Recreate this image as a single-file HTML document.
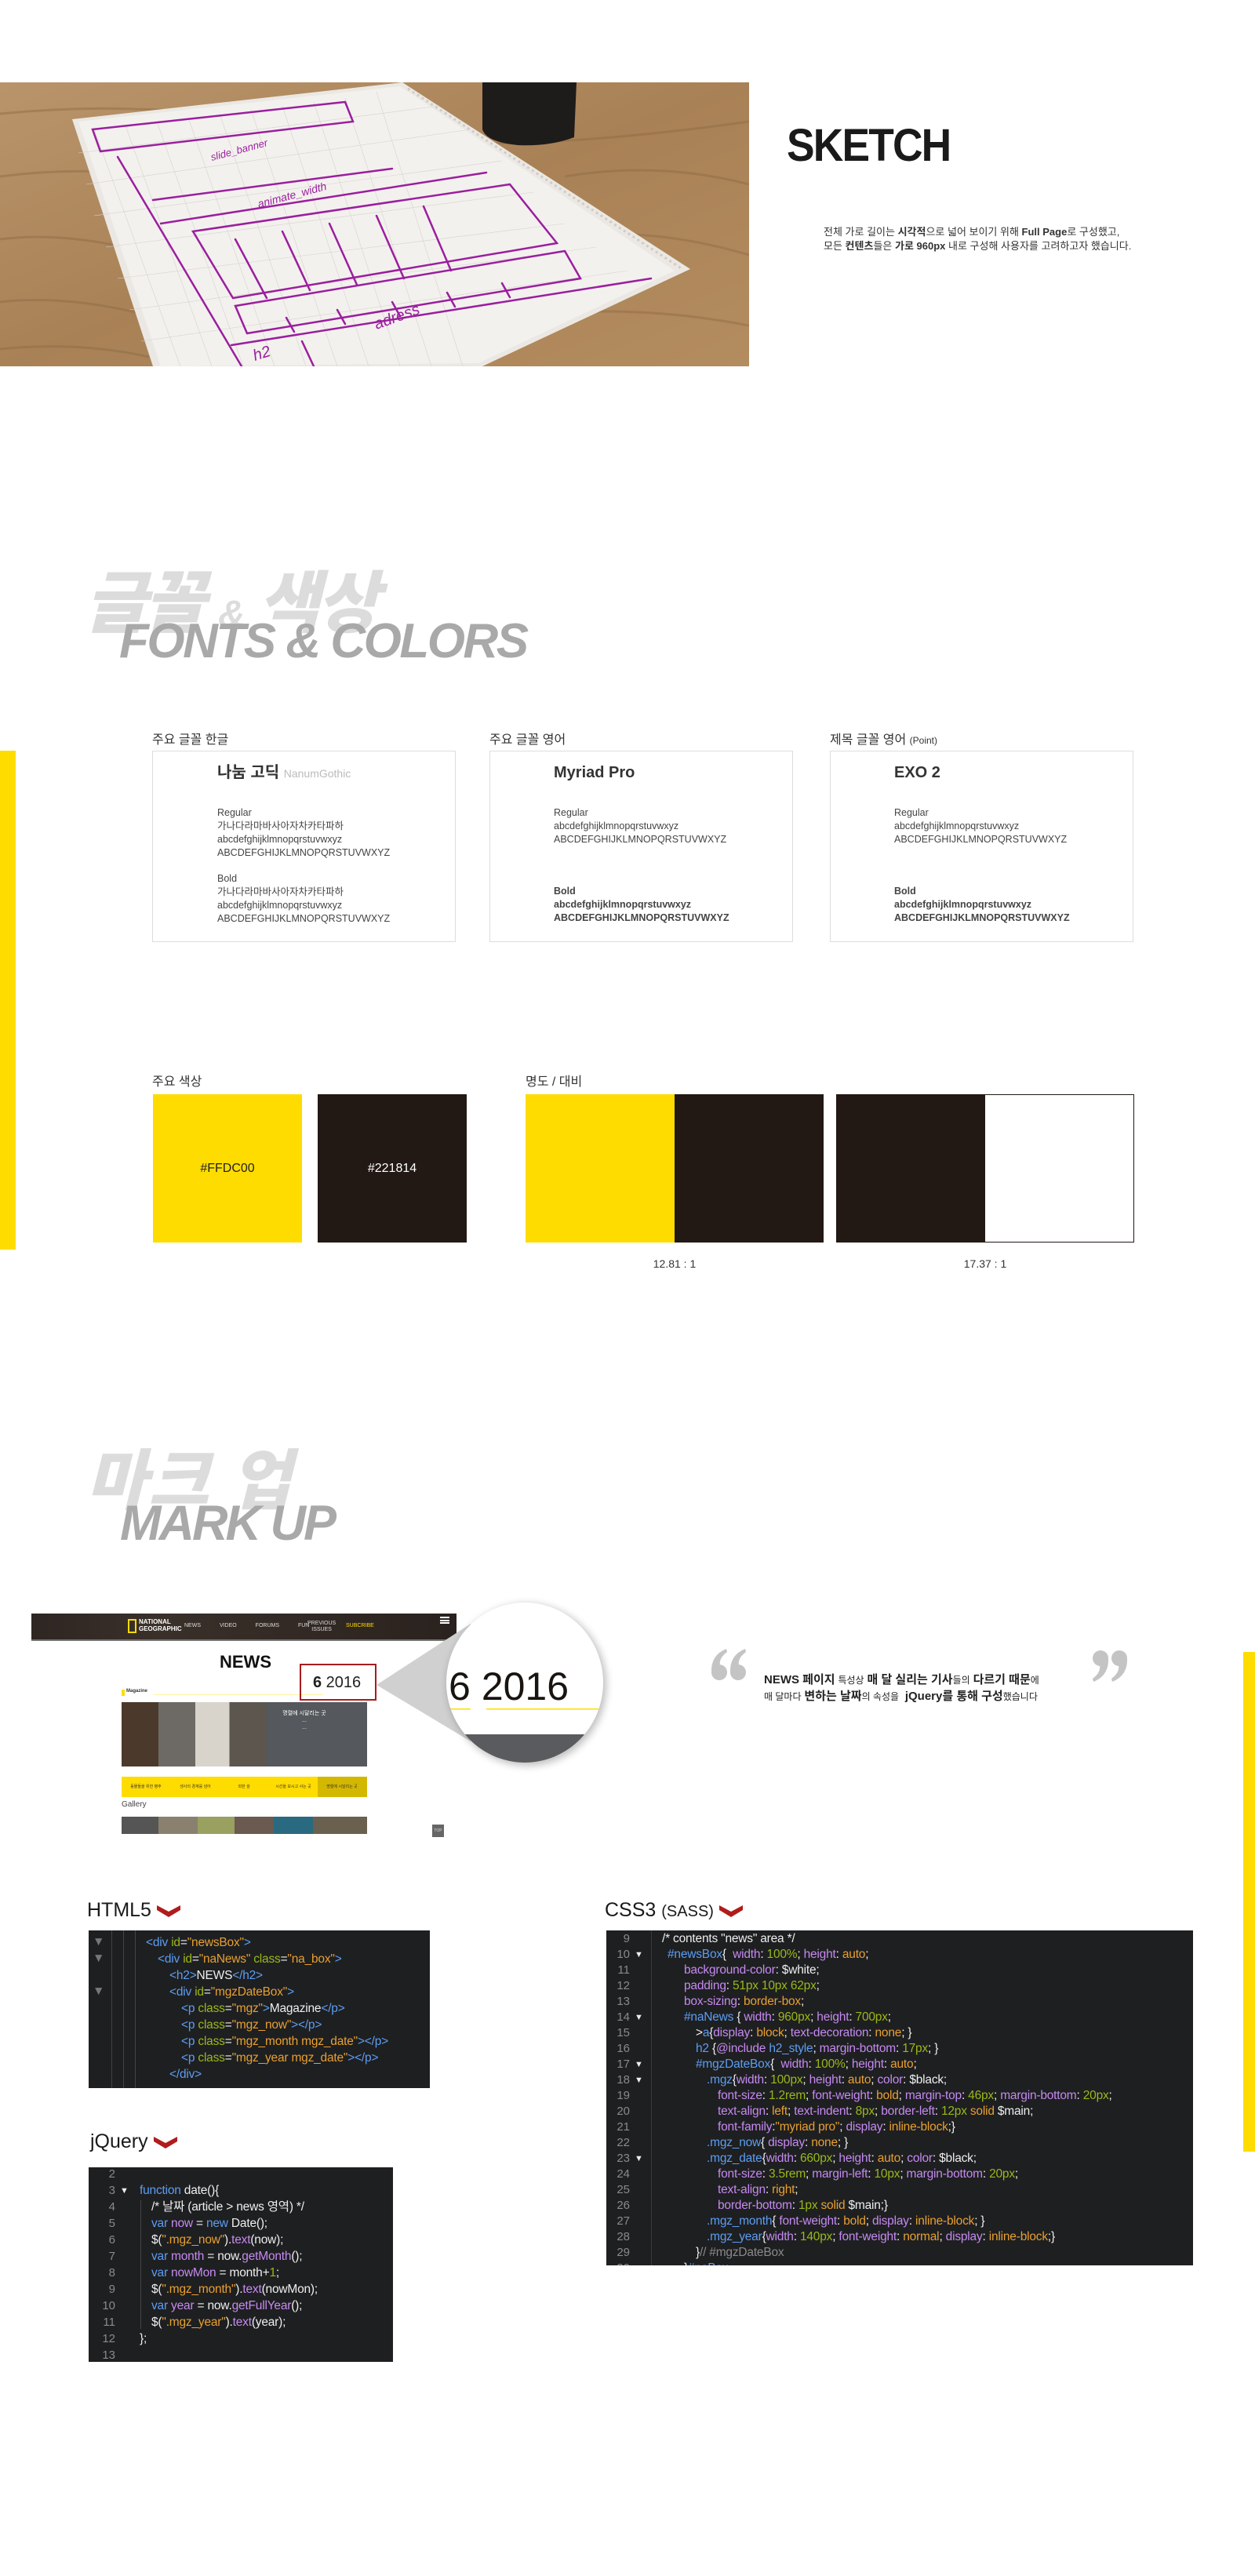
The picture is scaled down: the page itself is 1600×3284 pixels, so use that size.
<!DOCTYPE html>
<html><head><meta charset="utf-8">
<style>
*{margin:0;padding:0;box-sizing:border-box}
body{width:1600px;height:3284px;background:#fff;position:relative;overflow:hidden;font-family:"Liberation Sans","Noto Sans CJK KR",sans-serif;color:#222}
.a{position:absolute;white-space:nowrap}
.kr{font-family:"Liberation Sans","Noto Sans CJK KR",sans-serif}
.card{position:absolute;border:1px solid #ddd;background:#fff}
.card .a{font-size:12.5px;color:#444;line-height:17px}
.code{position:absolute;background:#1e1f21;overflow:hidden}
.code .l{position:absolute;white-space:pre;font-size:15.5px;line-height:20px;color:#eee;letter-spacing:-0.2px}
.code .n{position:absolute;font-size:15px;line-height:20px;color:#8a8a8a;text-align:right;width:26px}
.p{color:#c58af0}.g{color:#9ab81a}.o{color:#e8a030}.b{color:#5c9df2}.w{color:#f0f0f0}.c{color:#8a8a8a}
.chev{display:inline-block;vertical-align:middle}
.nv{position:absolute;top:2265px;height:26px;width:62px;font-size:5px;color:#333;text-align:center;line-height:26px;overflow:hidden}
</style></head><body>

<!-- SKETCH -->
<svg class="a" style="left:0;top:105px" width="955" height="362" viewBox="0 0 955 362">
<defs><linearGradient id="wd" x1="0" y1="0" x2="1" y2="1"><stop offset="0" stop-color="#b9946a"/><stop offset="0.5" stop-color="#a98156"/><stop offset="1" stop-color="#b38c5f"/></linearGradient></defs>
<rect width="955" height="362" fill="url(#wd)"/>
<g stroke="#8d6a44" stroke-width="3" fill="none" opacity="0.45">
<path d="M0 40 Q200 20 400 60 T955 50"/><path d="M0 120 Q150 100 300 140"/><path d="M0 200 Q80 190 180 215"/><path d="M0 280 Q90 270 200 300"/><path d="M650 300 Q800 280 955 310"/><path d="M700 200 Q820 180 955 220"/><path d="M720 120 Q840 100 955 130"/><path d="M0 340 Q100 330 190 350"/>
</g>
<polygon points="92,47 513,0 880,238 615,362 195,362" fill="#ebe8e3"/>
<polygon points="100,50 510,5 860,240 610,358 205,362" fill="#f3f1ee"/>
<g stroke="#d6d2cc" stroke-width="0.6">
<path d="M120 60 L230 362 M160 55 L270 362 M200 50 L310 362 M240 45 L350 362 M280 40 L390 362 M320 35 L430 362 M360 30 L470 362 M400 25 L510 362 M440 20 L550 362 M480 12 L590 362"/>
<path d="M100 90 L560 30 M110 130 L600 60 M120 170 L640 100 M135 210 L680 140 M150 250 L720 180 M165 290 L760 210 M180 330 L800 240"/>
</g>
<g stroke="#cfcbc5" stroke-width="3" fill="none"><path d="M520 8 L870 238" stroke-dasharray="3 4"/></g>
<path d="M615 0 L735 0 L732 70 Q700 82 660 80 Q620 76 615 60 Z" fill="#1e1c1a"/>
<g stroke="#9a1f9e" stroke-width="2.5" fill="none" stroke-linecap="round">
<path d="M118 60 L440 25 L450 50 L128 88 Z"/>
<path d="M150 95 L308 362"/>
<path d="M195 150 L500 110"/>
<path d="M205 180 L620 115"/>
<path d="M246 190 L650 130 L710 205 L297 275 Z"/>
<path d="M300 285 L720 215 L740 250 L315 320 Z"/>
<path d="M295 335 L830 250"/>
<path d="M300 200 L340 275 M360 190 L395 265 M420 180 L455 258 M480 170 L515 250 M540 158 L575 240"/>
<path d="M365 300 L375 318 M430 290 L440 308 M500 280 L510 298 M570 268 L580 286 M640 256 L650 274"/>
<path d="M385 330 L400 362"/>
</g>
<g fill="#9a1f9e" font-family="Liberation Sans" font-style="italic" font-size="20">
<text x="480" y="315" transform="rotate(-20 480 315)">adress</text>
<text x="325" y="355" transform="rotate(-18 325 355)">h2</text>
<text x="330" y="160" font-size="14" transform="rotate(-15 330 160)">animate_width</text>
<text x="270" y="100" font-size="13" transform="rotate(-15 270 100)">slide_banner</text>
</g>
</svg>
<div class="a" style="left:1003px;top:152px;font-size:58px;font-weight:bold;color:#1a1a1a;letter-spacing:-2px;transform:scaleX(0.92);transform-origin:left">SKETCH</div>
<div class="a kr" style="left:1050px;top:287px;font-size:13px;line-height:18px;color:#333">전체 가로 길이는 <b>시각적</b>으로 넓어 보이기 위해 <b>Full Page</b>로 구성했고,<br>모든 <b>컨텐츠</b>들은 <b>가로 960px</b> 내로 구성해 사용자를 고려하고자 했습니다.</div>

<!-- FONTS & COLORS -->
<div class="a kr" style="left:108px;top:715px;font-size:86px;font-weight:900;font-style:italic;color:#dcdcdc;letter-spacing:-4px;line-height:110px">글꼴 <span style="font-size:48px">&amp;</span> 색상</div>
<div class="a" style="left:152px;top:778px;font-size:62px;font-weight:bold;font-style:italic;color:#a9a9a9;letter-spacing:-2.5px;line-height:80px">FONTS &amp; COLORS</div>

<div class="a" style="left:0;top:957px;width:20px;height:636px;background:#ffdc00"></div>

<div class="a kr" style="left:194px;top:929px;font-size:16px;color:#333">주요 글꼴 한글</div>
<div class="a kr" style="left:624px;top:929px;font-size:16px;color:#333">주요 글꼴 영어</div>
<div class="a kr" style="left:1058px;top:929px;font-size:16px;color:#333">제목 글꼴 영어 <span style="font-size:12px">(Point)</span></div>

<div class="card" style="left:194px;top:957px;width:387px;height:244px">
<div class="a" style="left:82px;top:19px;font-size:20px;font-weight:bold;color:#333">나눔 고딕 <span style="font-size:14px;font-weight:normal;color:#bbb">NanumGothic</span></div>
<div class="a" style="left:82px;top:70px">Regular<br>가나다라마바사아자차카타파하<br>abcdefghijklmnopqrstuvwxyz<br>ABCDEFGHIJKLMNOPQRSTUVWXYZ</div>
<div class="a" style="left:82px;top:154px">Bold<br>가나다라마바사아자차카타파하<br>abcdefghijklmnopqrstuvwxyz<br>ABCDEFGHIJKLMNOPQRSTUVWXYZ</div>
</div>
<div class="card" style="left:624px;top:957px;width:387px;height:244px">
<div class="a" style="left:81px;top:19px;font-size:20px;font-weight:bold;color:#333">Myriad Pro</div>
<div class="a" style="left:81px;top:70px">Regular<br>abcdefghijklmnopqrstuvwxyz<br>ABCDEFGHIJKLMNOPQRSTUVWXYZ</div>
<div class="a" style="left:81px;top:170px;font-weight:bold">Bold<br>abcdefghijklmnopqrstuvwxyz<br>ABCDEFGHIJKLMNOPQRSTUVWXYZ</div>
</div>
<div class="card" style="left:1058px;top:957px;width:387px;height:244px">
<div class="a" style="left:81px;top:19px;font-size:20px;font-weight:bold;color:#333">EXO 2</div>
<div class="a" style="left:81px;top:70px">Regular<br>abcdefghijklmnopqrstuvwxyz<br>ABCDEFGHIJKLMNOPQRSTUVWXYZ</div>
<div class="a" style="left:81px;top:170px;font-weight:bold">Bold<br>abcdefghijklmnopqrstuvwxyz<br>ABCDEFGHIJKLMNOPQRSTUVWXYZ</div>
</div>

<div class="a kr" style="left:194px;top:1365px;font-size:16px;color:#333">주요 색상</div>
<div class="a kr" style="left:670px;top:1365px;font-size:16px;color:#333">명도 / 대비</div>
<div class="a" style="left:195px;top:1395px;width:190px;height:189px;background:#ffdc00;color:#222;font-size:16px;text-align:center;line-height:189px">#FFDC00</div>
<div class="a" style="left:405px;top:1395px;width:190px;height:189px;background:#221814;color:#fff;font-size:16px;text-align:center;line-height:189px">#221814</div>
<div class="a" style="left:670px;top:1395px;width:190px;height:189px;background:#ffdc00"></div>
<div class="a" style="left:860px;top:1395px;width:190px;height:189px;background:#221814"></div>
<div class="a" style="left:1066px;top:1395px;width:190px;height:189px;background:#221814"></div>
<div class="a" style="left:1256px;top:1395px;width:190px;height:189px;background:#fff;border:1px solid #221814;border-left:none"></div>
<div class="a" style="left:820px;top:1603px;width:80px;text-align:center;font-size:14px;color:#333">12.81 : 1</div>
<div class="a" style="left:1216px;top:1603px;width:80px;text-align:center;font-size:14px;color:#333">17.37 : 1</div>

<!-- MARK UP -->
<div class="a kr" style="left:110px;top:1835px;font-size:84px;font-weight:900;font-style:italic;color:#dcdcdc;letter-spacing:2px;line-height:106px">마크 업</div>
<div class="a" style="left:153px;top:1903px;font-size:63px;font-weight:bold;font-style:italic;color:#a9a9a9;letter-spacing:-3px;line-height:78px">MARK UP</div>

<!-- screenshot mock -->
<div class="a" style="left:40px;top:2057px;width:542px;height:35px;background:linear-gradient(90deg,#2e2622,#3a302a 30%,#2a221e);border-bottom:2px solid #777"></div>
<div class="a" style="left:163px;top:2064px;width:11px;height:18px;border:2px solid #ffdc00"></div>
<div class="a" style="left:177px;top:2063px;font-size:8px;line-height:9px;color:#fff;font-weight:bold">NATIONAL<br>GEOGRAPHIC</div>
<div class="a" style="left:235px;top:2069px;font-size:7px;color:#ddd;word-spacing:22px">NEWS VIDEO FORUMS FUN</div>
<div class="a" style="left:392px;top:2066px;font-size:7px;line-height:8px;color:#ddd;text-align:center">PREVIOUS<br>ISSUES</div>
<div class="a" style="left:441px;top:2069px;font-size:7px;color:#ffdc00">SUBCRIBE</div>
<div class="a" style="left:561px;top:2061px;width:12px;height:9px;border-top:2px solid #fff;border-bottom:2px solid #fff"></div>
<div class="a" style="left:561px;top:2065px;width:12px;height:2px;background:#fff"></div>
<div class="a" style="left:280px;top:2106px;font-size:22px;font-weight:bold;color:#111">NEWS</div>
<div class="a" style="left:155px;top:2154px;width:4px;height:8px;background:#ffdc00"></div>
<div class="a" style="left:161px;top:2153px;font-size:6px;font-weight:bold;color:#333">Magazine</div>
<div class="a" style="left:196px;top:2160px;width:216px;height:1px;background:#fff2a0"></div>
<div class="a" style="left:382px;top:2121px;width:98px;height:47px;border:2px solid #a51d1d"></div>
<div class="a" style="left:399px;top:2134px;font-size:20px;color:#222"><b>6</b> 2016</div>
<div class="a" style="left:155px;top:2170px;width:313px;height:82px;background:linear-gradient(90deg,#4b3a2c 0 15%,#6d6a66 15% 30%,#d8d4cc 30% 44%,#5d564e 44% 59%,#55585c 59%)"></div>
<div class="a kr" style="left:318px;top:2180px;width:140px;text-align:center;font-size:7px;color:#fff;line-height:9px">명렬에 시달리는 곳<br>...<br>...</div>
<div class="a" style="left:155px;top:2265px;width:313px;height:26px;background:#ffdc00"></div>
<div class="a" style="left:405px;top:2265px;width:63px;height:26px;background:#d4b800"></div>
<div class="nv kr" style="left:155px">동물들을 위한 병주</div>
<div class="nv kr" style="left:218px">생사의 경계를 넘어</div>
<div class="nv kr" style="left:280px">외딴 섬</div>
<div class="nv kr" style="left:343px">시선을 모시고 사는 곳</div>
<div class="nv kr" style="left:405px">명렬에 시달리는 곳</div>
<div class="a" style="left:155px;top:2295px;font-size:10px;color:#444">Gallery</div>
<div class="a" style="left:155px;top:2316px;width:313px;height:22px;background:linear-gradient(90deg,#555 0 15%,#8a8070 15% 31%,#9aa060 31% 46%,#6a5a50 46% 62%,#2a6a80 62% 78%,#6a6050 78%)"></div>
<div class="a" style="left:551px;top:2326px;width:15px;height:16px;background:#666;font-size:5px;color:#ddd;text-align:center;line-height:16px">TOP</div>

<svg class="a" style="left:470px;top:2030px" width="320" height="240" viewBox="470 2030 320 240">
<defs><filter id="sh" x="-20%" y="-20%" width="140%" height="140%"><feGaussianBlur stdDeviation="5"/></filter><clipPath id="cc"><ellipse cx="669" cy="2145" rx="100" ry="102"/></clipPath></defs>
<polygon points="480,2148 600,2070 600,2220" fill="#d0d0d0"/>
<ellipse cx="672" cy="2148" rx="101" ry="103" fill="#000" opacity="0.25" filter="url(#sh)"/>
<ellipse cx="669" cy="2145" rx="100" ry="102" fill="#fff"/>
<rect x="560" y="2211" width="220" height="50" fill="#5a5b5e" clip-path="url(#cc)"/>
<text x="572" y="2167" font-family="Liberation Sans" font-size="50" fill="#1a1410" clip-path="url(#cc)"><tspan>6</tspan><tspan dx="14">2016</tspan></text>
<rect x="570" y="2178" width="30" height="1.5" fill="#ffdc00" clip-path="url(#cc)"/>
<rect x="620" y="2178" width="150" height="1.5" fill="#ffdc00" clip-path="url(#cc)"/>
</svg>

<!-- quote -->
<svg class="a" style="left:906px;top:2102px" width="48" height="42" viewBox="0 0 48 42">
<g fill="#c4c4c4">
<circle cx="11" cy="30" r="10"/><path d="M1 30 Q0 8 20 0 L21 4 Q10 12 12 22 Z"/>
<circle cx="35" cy="30" r="10"/><path d="M25 30 Q24 8 44 0 L45 4 Q34 12 36 22 Z"/>
</g></svg>
<svg class="a" style="left:1390px;top:2102px" width="48" height="42" viewBox="0 0 48 42">
<g fill="#c4c4c4" transform="rotate(180 24 21)">
<circle cx="11" cy="30" r="10"/><path d="M1 30 Q0 8 20 0 L21 4 Q10 12 12 22 Z"/>
<circle cx="35" cy="30" r="10"/><path d="M25 30 Q24 8 44 0 L45 4 Q34 12 36 22 Z"/>
</g></svg>
<div class="a kr" style="left:974px;top:2131px;font-size:14px;line-height:20px;color:#222;text-align:left"><b style="font-size:15px">NEWS 페이지</b> <span style="font-size:12px">특성상</span> <b style="font-size:15px">매 달 실리는 기사</b><span style="font-size:12px">들의</span> <b style="font-size:15px">다르기 때문</b><span style="font-size:12px">에</span><br><span style="font-size:12px">매 달마다</span> <b style="font-size:15px">변하는 날짜</b><span style="font-size:12px">의 속성을</span>&nbsp; <b style="font-size:15px">jQuery를 통해 구성</b><span style="font-size:12px">했습니다</span></div>
<div class="a" style="left:1585px;top:2106px;width:15px;height:637px;background:#ffdc00"></div>

<!-- HTML5 -->
<div class="a" style="left:111px;top:2421px;font-size:25px;color:#1a1a1a">HTML5 <svg class="chev" width="30" height="18" viewBox="0 0 30 18"><path d="M0 2 L15 10 L30 2 L30 8 L15 17 L0 8 Z" fill="#b01c1c"/></svg></div>
<div class="code" style="left:113px;top:2461px;width:435px;height:201px">
<div class="l" style="left:5px;top:5px;color:#777">▼</div>
<div class="l" style="left:5px;top:26px;color:#777">▼</div>
<div class="l" style="left:5px;top:68px;color:#777">▼</div>
<div class="l" style="left:73px;top:6px"><span class="b">&lt;div</span> <span class="g">id</span>=<span class="o">"newsBox"</span><span class="b">&gt;</span></div>
<div class="l" style="left:88px;top:27px"><span class="b">&lt;div</span> <span class="g">id</span>=<span class="o">"naNews"</span> <span class="g">class</span>=<span class="o">"na_box"</span><span class="b">&gt;</span></div>
<div class="l" style="left:103px;top:48px"><span class="b">&lt;h2&gt;</span>NEWS<span class="b">&lt;/h2&gt;</span></div>
<div class="l" style="left:103px;top:69px"><span class="b">&lt;div</span> <span class="g">id</span>=<span class="o">"mgzDateBox"</span><span class="b">&gt;</span></div>
<div class="l" style="left:118px;top:90px"><span class="b">&lt;p</span> <span class="g">class</span>=<span class="o">"mgz"</span><span class="b">&gt;</span>Magazine<span class="b">&lt;/p&gt;</span></div>
<div class="l" style="left:118px;top:111px"><span class="b">&lt;p</span> <span class="g">class</span>=<span class="o">"mgz_now"</span><span class="b">&gt;&lt;/p&gt;</span></div>
<div class="l" style="left:118px;top:132px"><span class="b">&lt;p</span> <span class="g">class</span>=<span class="o">"mgz_month mgz_date"</span><span class="b">&gt;&lt;/p&gt;</span></div>
<div class="l" style="left:118px;top:153px"><span class="b">&lt;p</span> <span class="g">class</span>=<span class="o">"mgz_year mgz_date"</span><span class="b">&gt;&lt;/p&gt;</span></div>
<div class="l" style="left:103px;top:174px"><span class="b">&lt;/div&gt;</span></div>
<div class="a" style="left:29px;top:0;width:1px;height:201px;background:#444"></div>
<div class="a" style="left:44px;top:0;width:1px;height:201px;background:#444"></div>
<div class="a" style="left:59px;top:0;width:1px;height:201px;background:#444"></div>
</div>

<!-- CSS3 -->
<div class="a" style="left:771px;top:2421px;font-size:25px;color:#1a1a1a">CSS3 <span style="font-size:20px">(SASS)</span> <svg class="chev" width="30" height="18" viewBox="0 0 30 18"><path d="M0 2 L15 10 L30 2 L30 8 L15 17 L0 8 Z" fill="#b01c1c"/></svg></div>
<div class="code" style="left:773px;top:2461px;width:748px;height:427px">
<div class="a" style="left:57px;top:0;width:1px;height:427px;background:#3a3a3a"></div>
<div class="n" style="left:4px;top:1px">9</div><div class="n" style="left:4px;top:21px">10</div><div class="n" style="left:4px;top:41px">11</div><div class="n" style="left:4px;top:61px">12</div><div class="n" style="left:4px;top:81px">13</div><div class="n" style="left:4px;top:101px">14</div><div class="n" style="left:4px;top:121px">15</div><div class="n" style="left:4px;top:141px">16</div><div class="n" style="left:4px;top:161px">17</div><div class="n" style="left:4px;top:181px">18</div><div class="n" style="left:4px;top:201px">19</div><div class="n" style="left:4px;top:221px">20</div><div class="n" style="left:4px;top:241px">21</div><div class="n" style="left:4px;top:261px">22</div><div class="n" style="left:4px;top:281px">23</div><div class="n" style="left:4px;top:301px">24</div><div class="n" style="left:4px;top:321px">25</div><div class="n" style="left:4px;top:341px">26</div><div class="n" style="left:4px;top:361px">27</div><div class="n" style="left:4px;top:381px">28</div><div class="n" style="left:4px;top:401px">29</div><div class="n" style="left:4px;top:421px">30</div>
<div class="l c" style="left:36px;top:21px;font-size:11px">▼</div><div class="l c" style="left:36px;top:101px;font-size:11px">▼</div><div class="l c" style="left:36px;top:161px;font-size:11px">▼</div><div class="l c" style="left:36px;top:181px;font-size:11px">▼</div><div class="l c" style="left:36px;top:281px;font-size:11px">▼</div>
<div class="l c" style="left:71px;top:1px">/* contents "news" area */</div>
<div class="l" style="left:78px;top:21px"><span class="b">#newsBox</span>{  <span class="p">width</span>: <span class="g">100%</span>; <span class="p">height</span>: <span class="o">auto</span>;</div>
<div class="l" style="left:99px;top:41px"><span class="p">background-color</span>: $white;</div>
<div class="l" style="left:99px;top:61px"><span class="p">padding</span>: <span class="g">51px 10px 62px</span>;</div>
<div class="l" style="left:99px;top:81px"><span class="p">box-sizing</span>: <span class="o">border-box</span>;</div>
<div class="l" style="left:99px;top:101px"><span class="b">#naNews</span> { <span class="p">width</span>: <span class="g">960px</span>; <span class="p">height</span>: <span class="g">700px</span>;</div>
<div class="l" style="left:114px;top:121px">&gt;<span class="b">a</span>{<span class="p">display</span>: <span class="o">block</span>; <span class="p">text-decoration</span>: <span class="o">none</span>; }</div>
<div class="l" style="left:114px;top:141px"><span class="b">h2</span> {<span class="p">@include</span> <span class="b">h2_style</span>; <span class="p">margin-bottom</span>: <span class="g">17px</span>; }</div>
<div class="l" style="left:114px;top:161px"><span class="b">#mgzDateBox</span>{  <span class="p">width</span>: <span class="g">100%</span>; <span class="p">height</span>: <span class="o">auto</span>;</div>
<div class="l" style="left:128px;top:181px"><span class="b">.mgz</span>{<span class="p">width</span>: <span class="g">100px</span>; <span class="p">height</span>: <span class="o">auto</span>; <span class="p">color</span>: $black;</div>
<div class="l" style="left:142px;top:201px"><span class="p">font-size</span>: <span class="g">1.2rem</span>; <span class="p">font-weight</span>: <span class="o">bold</span>; <span class="p">margin-top</span>: <span class="g">46px</span>; <span class="p">margin-bottom</span>: <span class="g">20px</span>;</div>
<div class="l" style="left:142px;top:221px"><span class="p">text-align</span>: <span class="o">left</span>; <span class="p">text-indent</span>: <span class="g">8px</span>; <span class="p">border-left</span>: <span class="g">12px</span> <span class="o">solid</span> $main;</div>
<div class="l" style="left:142px;top:241px"><span class="p">font-family</span>:<span class="o">"myriad pro"</span>; <span class="p">display</span>: <span class="o">inline-block</span>;}</div>
<div class="l" style="left:128px;top:261px"><span class="b">.mgz_now</span>{ <span class="p">display</span>: <span class="o">none</span>; }</div>
<div class="l" style="left:128px;top:281px"><span class="b">.mgz_date</span>{<span class="p">width</span>: <span class="g">660px</span>; <span class="p">height</span>: <span class="o">auto</span>; <span class="p">color</span>: $black;</div>
<div class="l" style="left:142px;top:301px"><span class="p">font-size</span>: <span class="g">3.5rem</span>; <span class="p">margin-left</span>: <span class="g">10px</span>; <span class="p">margin-bottom</span>: <span class="g">20px</span>;</div>
<div class="l" style="left:142px;top:321px"><span class="p">text-align</span>: <span class="o">right</span>;</div>
<div class="l" style="left:142px;top:341px"><span class="p">border-bottom</span>: <span class="g">1px</span> <span class="o">solid</span> $main;}</div>
<div class="l" style="left:128px;top:361px"><span class="b">.mgz_month</span>{ <span class="p">font-weight</span>: <span class="o">bold</span>; <span class="p">display</span>: <span class="o">inline-block</span>; }</div>
<div class="l" style="left:128px;top:381px"><span class="b">.mgz_year</span>{<span class="p">width</span>: <span class="g">140px</span>; <span class="p">font-weight</span>: <span class="o">normal</span>; <span class="p">display</span>: <span class="o">inline-block</span>;}</div>
<div class="l" style="left:114px;top:401px">}<span class="c">// #mgzDateBox</span></div>
<div class="l" style="left:99px;top:421px">}<span class="b">#naBox</span></div>
</div>

<!-- jQuery -->
<div class="a" style="left:115px;top:2716px;font-size:25px;color:#1a1a1a">jQuery <svg class="chev" width="30" height="18" viewBox="0 0 30 18"><path d="M0 2 L15 10 L30 2 L30 8 L15 17 L0 8 Z" fill="#b01c1c"/></svg></div>
<div class="code" style="left:113px;top:2763px;width:388px;height:248px">
<div class="n" style="left:8px;top:-1px">2</div><div class="n" style="left:8px;top:20px">3</div><div class="n" style="left:8px;top:41px">4</div><div class="n" style="left:8px;top:62px">5</div><div class="n" style="left:8px;top:83px">6</div><div class="n" style="left:8px;top:104px">7</div><div class="n" style="left:8px;top:125px">8</div><div class="n" style="left:8px;top:146px">9</div><div class="n" style="left:8px;top:167px">10</div><div class="n" style="left:8px;top:188px">11</div><div class="n" style="left:8px;top:209px">12</div><div class="n" style="left:8px;top:230px">13</div>
<div class="l c" style="left:40px;top:20px;font-size:11px">▼</div>
<div class="a" style="left:66px;top:42px;width:1px;height:164px;background:#444"></div>
<div class="l" style="left:65px;top:20px"><span class="b">function</span> date(){</div>
<div class="l c" style="left:80px;top:41px">/* 날짜 (article &gt; news 영역) */</div>
<div class="l" style="left:80px;top:62px"><span class="b">var</span> <span class="p">now</span> = <span class="b">new</span> Date();</div>
<div class="l" style="left:80px;top:83px">$(<span class="o">".mgz_now"</span>).<span class="p">text</span>(now);</div>
<div class="l" style="left:80px;top:104px"><span class="b">var</span> <span class="p">month</span> = now.<span class="p">getMonth</span>();</div>
<div class="l" style="left:80px;top:125px"><span class="b">var</span> <span class="p">nowMon</span> = month+<span class="g">1</span>;</div>
<div class="l" style="left:80px;top:146px">$(<span class="o">".mgz_month"</span>).<span class="p">text</span>(nowMon);</div>
<div class="l" style="left:80px;top:167px"><span class="b">var</span> <span class="p">year</span> = now.<span class="p">getFullYear</span>();</div>
<div class="l" style="left:80px;top:188px">$(<span class="o">".mgz_year"</span>).<span class="p">text</span>(year);</div>
<div class="l" style="left:65px;top:209px">};</div>
</div>

</body></html>
